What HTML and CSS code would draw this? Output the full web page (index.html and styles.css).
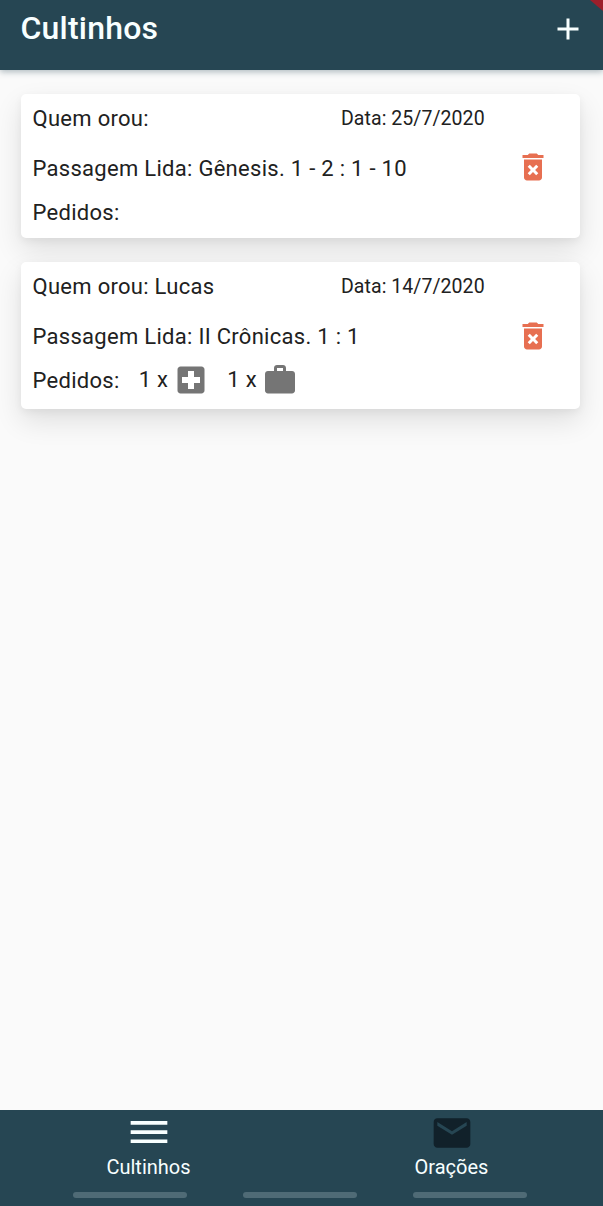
FILE: index.html
```html
<!DOCTYPE html>
<html lang="pt-BR">
<head>
<meta charset="utf-8">
<title>Cultinhos</title>
<link rel="stylesheet" href="styles.css">
</head>
<body>
<header class="appbar">
  <h1 class="title">Cultinhos</h1>
  <svg class="icon add" viewBox="0 0 24 24"><path d="M19 13h-6v6h-2v-6H5v-2h6V5h2v6h6v2z"/></svg>
  <div class="ribbon"></div>
</header>
<main class="list">
  <article class="card">
    <div class="info">
      <div class="row first"><span class="who">Quem orou:</span><span class="date">Data: 25/7/2020</span></div>
      <div class="row passage">Passagem Lida: Gênesis. 1 - 2 : 1 - 10</div>
      <div class="row requests">Pedidos:</div>
    </div>
    <svg class="icon trash" viewBox="0 0 24 24"><path d="M6 19c0 1.100.9 2 2 2h8c1.100 0 2-.9 2-2V7H6v12zm2.460-7.120l1.410-1.410L12 12.590l2.120-2.120 1.410 1.410L13.410 14l2.120 2.120-1.410 1.410L12 15.410l-2.120 2.120-1.410-1.410L10.590 14l-2.130-2.120zM15.500 4l-1-1h-5l-1 1H5v2h14V4z"/></svg>
  </article>
  <article class="card tall">
    <div class="info">
      <div class="row first"><span class="who">Quem orou: Lucas</span><span class="date">Data: 14/7/2020</span></div>
      <div class="row passage">Passagem Lida: II Crônicas. 1 : 1</div>
      <div class="row requests">Pedidos:
        <span class="request health">1 x <svg class="icon gray" viewBox="0 0 24 24"><path d="M19 3H5c-1.100 0-1.990.9-1.990 2L3 19c0 1.100.9 2 2 2h14c1.100 0 2-.9 2-2V5c0-1.100-.9-2-2-2zm-1 11h-4v4h-4v-4H6v-4h4V6h4v4h4v4z"/></svg></span>
        <span class="request work">1 x <svg class="icon gray" viewBox="0 0 24 24"><path d="M20 6h-4V4c0-1.110-.89-2-2-2h-4c-1.110 0-2 .89-2 2v2H4c-1.110 0-1.990.89-1.990 2L2 19c0 1.110.89 2 2 2h16c1.110 0 2-.89 2-2V8c0-1.110-.89-2-2-2zm-6 0h-4V4h4v2z"/></svg></span>
      </div>
    </div>
    <svg class="icon trash" viewBox="0 0 24 24"><path d="M6 19c0 1.100.9 2 2 2h8c1.100 0 2-.9 2-2V7H6v12zm2.460-7.120l1.410-1.410L12 12.590l2.120-2.120 1.410 1.410L13.410 14l2.120 2.120-1.410 1.410L12 15.410l-2.120 2.120-1.410-1.410L10.590 14l-2.130-2.120zM15.500 4l-1-1h-5l-1 1H5v2h14V4z"/></svg>
  </article>
</main>
<footer class="bottom">
  <nav class="tabs">
    <a class="tab"><svg class="tab-icon" viewBox="0 0 24 24"><path d="M2 15.500v2h20v-2H2zm0-5v2h20v-2H2zm0-5v2h20v-2H2z"/></svg><span>Cultinhos</span></a>
    <a class="tab"><svg class="tab-icon dark" viewBox="0 0 24 24"><path d="M20 4H4c-1.100 0-1.990.9-1.990 2L2 18c0 1.100.9 2 2 2h16c1.100 0 2-.9 2-2V6c0-1.100-.9-2-2-2zm0 4l-8 5-8-5V6l8 5 8-5v2z"/></svg><span>Orações</span></a>
  </nav>
  <div class="gestures"><i class="pill"></i><i class="pill"></i><i class="pill"></i></div>
</footer>
</body>
</html>
```
FILE: styles.css
```css
* { box-sizing: border-box; }
body {
  margin: 0;
  height: 1206px;
  display: flex;
  flex-direction: column;
  background: #fafafa;
  color: #212121;
  font-family: Roboto, sans-serif;
  overflow: hidden;
}
.icon { width: 36px; height: 36px; flex: none; display: block; }
.appbar {
  position: relative;
  z-index: 1;
  height: 70px;
  flex: none;
  display: flex;
  align-items: flex-start;
  justify-content: space-between;
  padding: 0 17px 0 20.5px;
  background: #264653;
  box-shadow: 0 2px 6px rgba(38, 70, 83, .35);
}
.title { margin: 9px 0 0; font-size: 32px; line-height: 38px; font-weight: 500; letter-spacing: .2px; color: #f8ffff; }
.add { margin-top: 11px; fill: #f8ffff; }
.ribbon {
  position: absolute;
  top: 0;
  right: 0;
  width: 13px;
  height: 11px;
  background: #9c1f2b;
  clip-path: polygon(0 0, 100% 0, 100% 100%);
}
.list { flex: 1; display: flex; flex-direction: column; gap: 24px; padding: 24px 23px 0 21px; }
.card {
  display: flex;
  justify-content: space-between;
  height: 144px;
  padding: 0 29px 0 11.500px;
  background: #fff;
  border-radius: 5px;
  box-shadow: 0 12px 28px rgba(0, 0, 0, .11), 0 3px 8px rgba(0, 0, 0, .05);
}
.tall { height: 147px; }
.row { font-size: 22px; letter-spacing: .29px; line-height: 26px; white-space: nowrap; }
.first { display: flex; margin-top: 12px; }
.who { width: 308.500px; }
.date { font-size: 19.500px; letter-spacing: .06px; line-height: 26px; }
.passage { margin-top: 24px; }
.requests { margin-top: 18px; height: 26px; display: flex; align-items: center; }
.request { display: flex; align-items: center; gap: 5px; margin-top: -2px; }
.health { margin-left: 19px; }
.work { margin-left: 18px; }
.gray { fill: #757575; }
.trash { margin-top: 54.500px; fill: #e76f51; }
.tall .trash { margin-top: 55.500px; }
.bottom { height: 96px; flex: none; background: #264653; color: #f8ffff; }
.tabs { display: flex; width: 606px; height: 82px; margin-left: -3px; padding-top: 1px; }
.tab { flex: 1; display: flex; flex-direction: column; align-items: center; font-size: 20px; line-height: 24px; }
.tab-icon { width: 44px; height: 44px; fill: #f8ffff; }
.dark { fill: #11212a; }
.gestures { display: flex; gap: 56px; padding-left: 73px; }
.pill { width: 114px; height: 6px; border-radius: 3px; background: #4f6b76; }
```
